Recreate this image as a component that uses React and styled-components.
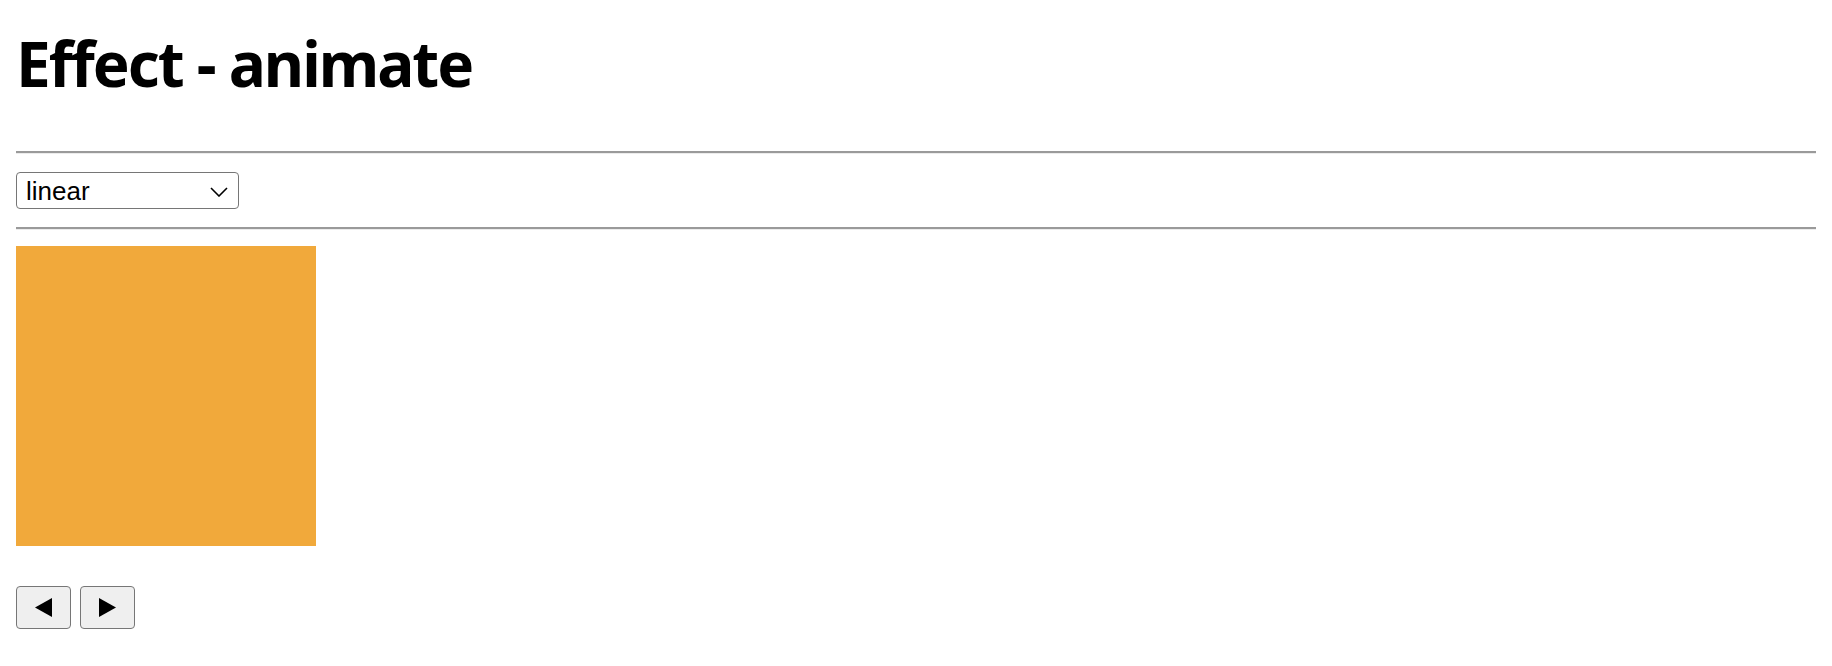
import styled, { createGlobalStyle } from "styled-components";

const GlobalStyle = createGlobalStyle`
  body {
    margin: 16px;
    background: #ffffff;
    font-family: "Liberation Sans", Arial, sans-serif;
  }
`;

const Title = styled.h1`
  margin: 16px 0 57px;
  font-family: "Noto Sans", "Open Sans", sans-serif;
  font-size: 62px;
  line-height: 62px;
  font-weight: 700;
  letter-spacing: -2px;
  color: #000;
`;

const Rule = styled.hr`
  height: 0;
  margin: 0 -6px ${(p) => p.$after}px 0;
  border: none;
  border-top: 2px solid #9a9a9a;
  border-bottom: 1px solid #ececec;
`;

const SelectWrap = styled.div`
  position: relative;
  width: 223px;
  height: 37px;
  margin-bottom: 18px;
`;

const Select = styled.select`
  appearance: none;
  width: 100%;
  height: 100%;
  margin: 0;
  padding: 0 0 0 9px;
  border: 1px solid #767676;
  border-radius: 4px;
  background: #fff;
  color: #000;
  font-family: "Liberation Sans", Arial, sans-serif;
  font-size: 26px;
`;

const Chevron = styled.svg`
  position: absolute;
  right: 11px;
  top: 15px;
  pointer-events: none;
`;

const Box = styled.div`
  width: 300px;
  height: 300px;
  background: #f1a93b;
  margin-bottom: 40px;
`;

const Controls = styled.div`
  display: flex;
  gap: 9px;
`;

const ArrowButton = styled.button`
  display: flex;
  align-items: center;
  justify-content: center;
  width: 55px;
  height: 43px;
  padding: 0;
  border: 1px solid #767676;
  border-radius: 4px;
  background: #efefef;
  cursor: pointer;
`;

function Triangle({ dir }) {
  return (
    <svg width="17" height="19" viewBox="0 0 17 19">
      {dir === "left" ? (
        <polygon points="0,9.5 17,0 17,19" fill="#000" />
      ) : (
        <polygon points="17,9.5 0,0 0,19" fill="#000" />
      )}
    </svg>
  );
}

export default function App() {
  return (
    <>
      <GlobalStyle />
      <Title>Effect - animate</Title>
      <Rule $after={18} />
      <SelectWrap>
        <Select defaultValue="linear">
          <option value="linear">linear</option>
          <option value="swing">swing</option>
        </Select>
        <Chevron width="18" height="10" viewBox="0 0 18 10">
          <polyline
            points="1,1 9,9 17,1"
            fill="none"
            stroke="#000"
            strokeWidth="1.6"
          />
        </Chevron>
      </SelectWrap>
      <Rule $after={16} />
      <Box />
      <Controls>
        <ArrowButton>
          <Triangle dir="left" />
        </ArrowButton>
        <ArrowButton>
          <Triangle dir="right" />
        </ArrowButton>
      </Controls>
    </>
  );
}
